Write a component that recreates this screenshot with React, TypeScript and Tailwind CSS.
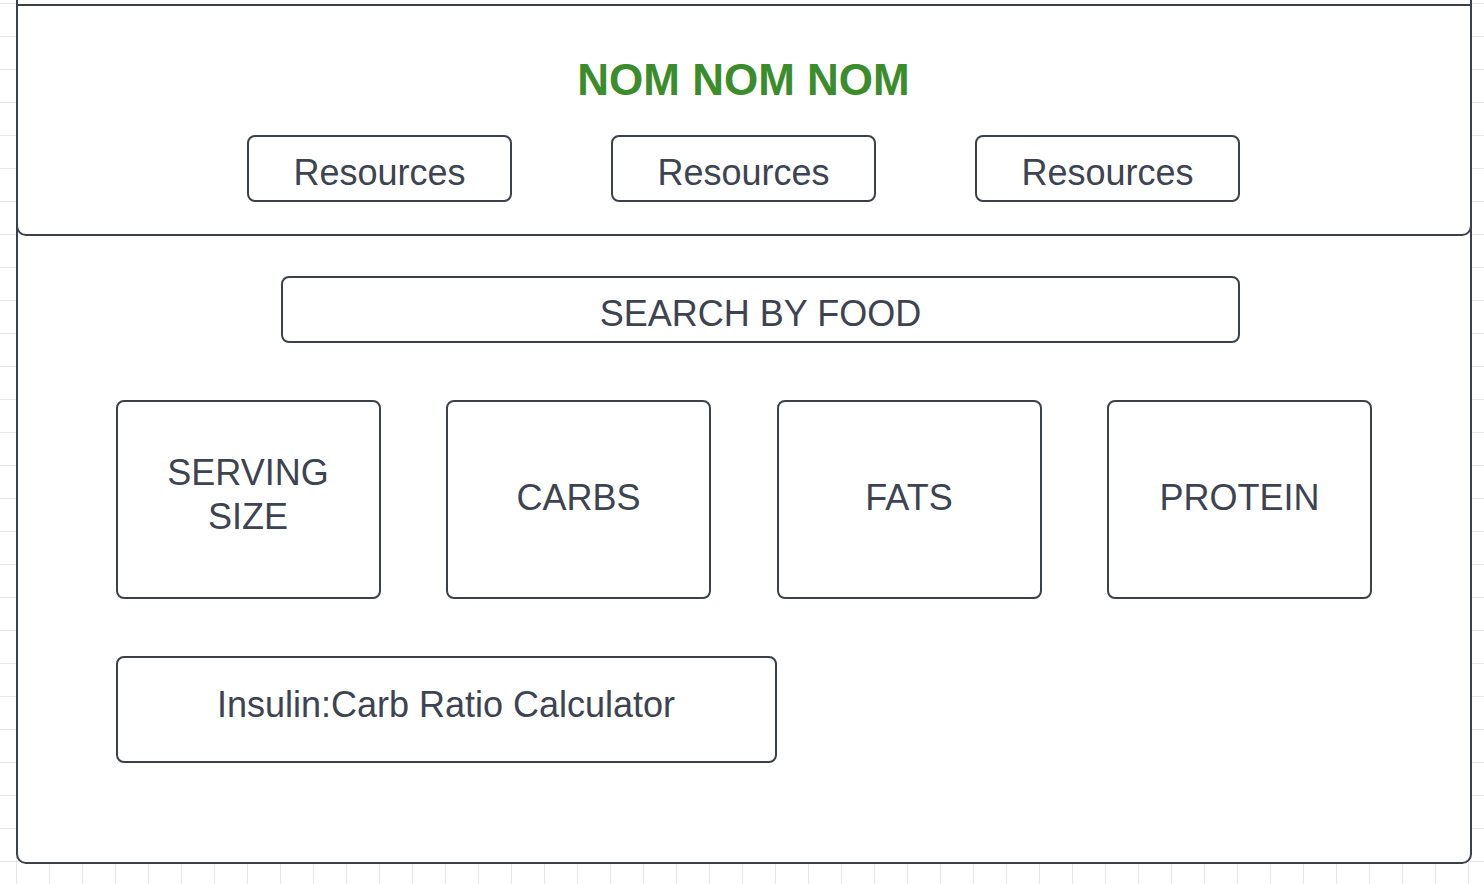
const STROKE = 'border-2 border-[#3c4049]'
const LABEL = 'font-["Liberation_Sans",Arial,sans-serif] text-[36px] text-[#3d4350]'

const NUTRIENTS = [['SERVING', 'SIZE'], ['CARBS'], ['FATS'], ['PROTEIN']]

export default function App() {
  return (
    <div className="relative h-[884px] w-full overflow-hidden bg-white bg-[linear-gradient(to_right,#e6e6e6_1px,transparent_1px),linear-gradient(to_bottom,#e6e6e6_1px,transparent_1px)] bg-[size:33px_33px] bg-[position:16px_3px]">
      {/* Outer frame, its top edge sits above the viewport */}
      <div className={`-mt-[20px] ml-[15.5px] flex h-[884px] w-[1456px] flex-col rounded-[10px] bg-white ${STROKE}`}>

        {/* Header */}
        <div className={`-mx-[2px] mt-[22px] flex h-[232px] flex-col items-center rounded-b-[10px] pt-[52px] ${STROKE}`}>
          <h1 className='font-["Liberation_Sans",Arial,sans-serif] text-[44px] font-bold leading-none text-[#3b8c2b]'>
            NOM NOM NOM
          </h1>
          <div className="mt-[33px] flex gap-[99px]">
            {[0, 1, 2].map((i) => (
              <button
                key={i}
                className={`flex h-[67px] w-[265px] items-center justify-center rounded-[8px] pt-[9px] ${STROKE} ${LABEL}`}
              >
                Resources
              </button>
            ))}
          </div>
        </div>

        {/* Search */}
        <div className={`ml-[263.5px] mt-[40px] flex h-[67px] w-[959px] items-center justify-center rounded-[8px] pt-[9px] ${STROKE} ${LABEL}`}>
          SEARCH BY FOOD
        </div>

        {/* Nutrient cards */}
        <div className="ml-[98px] mt-[57px] flex gap-[65.5px]">
          {NUTRIENTS.map((lines) => (
            <div
              key={lines.join(' ')}
              className={`flex h-[199px] w-[265px] flex-col items-center justify-center rounded-[8px] leading-[44px] ${lines.length > 1 ? 'pb-[10px]' : 'pb-[4px]'} ${STROKE} ${LABEL}`}
            >
              {lines.map((l) => (
                <span key={l}>{l}</span>
              ))}
            </div>
          ))}
        </div>

        {/* Calculator */}
        <div className={`ml-[98px] mt-[57px] flex h-[107px] w-[661px] items-center justify-center rounded-[8px] pb-[10px] ${STROKE} ${LABEL}`}>
          Insulin:Carb Ratio Calculator
        </div>
      </div>
    </div>
  )
}
